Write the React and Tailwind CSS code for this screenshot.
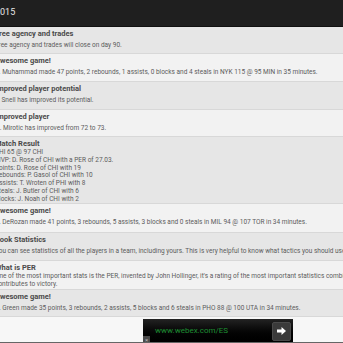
import React from "react";

const rows = [
  { h: "h-[27px]", bg: "bg-[#e6e6e6]", title: "Free agency and trades", lines: ["Free agency and trades will close on day 90."] },
  { h: "h-[28px]", bg: "bg-[#f2f2f2]", title: "Awesome game!", lines: ["S. Muhammad made 47 points, 2 rebounds, 1 assists, 0 blocks and 4 steals in NYK 115 @ 95 MIN in 35 minutes."] },
  { h: "h-[28px]", bg: "bg-[#e6e6e6]", title: "Improved player potential", lines: ["T. Snell has improved its potential."] },
  { h: "h-[27px]", bg: "bg-[#f2f2f2]", title: "Improved player", lines: ["N. Mirotic has improved from 72 to 73."] },
  {
    h: "h-[67px]", bg: "bg-[#e6e6e6]", title: "Match Result", tight: true,
    lines: [
      "PHI 65 @ 97 CHI",
      "MVP: D. Rose of CHI with a PER of 27.03.",
      "Points: D. Rose of CHI with 19",
      "Rebounds: P. Gasol of CHI with 10",
      "Assists: T. Wroten of PHI with 8",
      "Steals: J. Butler of CHI with 6",
      "Blocks: J. Noah of CHI with 2",
    ],
  },
  { h: "h-[29px]", bg: "bg-[#f2f2f2]", title: "Awesome game!", lines: ["D. DeRozan made 41 points, 3 rebounds, 5 assists, 3 blocks and 0 steals in MIL 94 @ 107 TOR in 34 minutes."] },
  { h: "h-[28px]", bg: "bg-[#e6e6e6]", title: "Book Statistics", lines: ["You can see statistics of all the players in a team, including yours. This is very helpful to know what tactics you should use."] },
  {
    h: "h-[29px]", bg: "bg-[#f2f2f2]", title: "What is PER", tight: true,
    lines: [
      "One of the most important stats is the PER, invented by John Hollinger, it's a rating of the most important statistics combined, which shows how much a player",
      "contributes to victory.",
    ],
  },
  { h: "h-[27px]", bg: "bg-[#e6e6e6]", title: "Awesome game!", lines: ["D. Green made 35 points, 3 rebounds, 2 assists, 5 blocks and 6 steals in PHO 88 @ 100 UTA in 34 minutes."] },
];

export default function App() {
  return (
    <div
      className="relative w-[343px] h-[343px] overflow-hidden bg-[#f7f7f7]"
      style={{ fontFamily: "Roboto, 'Noto Sans', sans-serif" }}
    >
      <div className="h-[27px] bg-[#1f1f1f] flex items-center border-b border-[#111]">
        <span className="ml-[-5px] text-[9px] text-[#e8e8e8] whitespace-nowrap">2015</span>
      </div>
      <div className="flex flex-col">
        {rows.map((r, i) => (
          <div
            key={i}
            className={`${r.h} ${r.bg} border-b border-[#d8d8d8] ml-[-5px] w-[700px] pt-[2px] flex flex-col`}
          >
            <div className="text-[7.5px] font-bold leading-[10px] text-[#4a4a4a] whitespace-nowrap">{r.title}</div>
            <div className={r.tight ? "flex flex-col" : "flex flex-col mt-[2px]"}>
              {r.lines.map((l, j) => (
                <div
                  key={j}
                  className={`text-[6.5px] text-[#5c5c5c] whitespace-nowrap ${r.tight ? "leading-[7.8px]" : "leading-[8px]"}`}
                >
                  {l}
                </div>
              ))}
            </div>
          </div>
        ))}
      </div>

      <div className="absolute left-[143px] top-[319px] w-[150px] h-[24px] bg-gradient-to-b from-[#232323] to-[#000] flex items-center">
        <span className="ml-[12px] text-[8px] text-[#1d8f32] whitespace-nowrap">www.webex.com/ES</span>
        <div className="ml-auto mr-[2px] w-[19px] h-[19px] rounded-[2px] bg-[#3a3a3a] border border-[#4a4a4a] flex items-center justify-center">
          <svg width="9" height="8" viewBox="0 0 9 8">
            <path d="M0 2.5h4.5V0L9 4 4.5 8V5.5H0z" fill="#fff" />
          </svg>
        </div>
        <div className="absolute left-0 bottom-0 w-[7px] h-[7px] bg-[#4a4a4a] flex items-center justify-center text-[6px] leading-none text-[#bbb]">
          ×
        </div>
      </div>
      <div className="absolute left-0 bottom-0 w-full h-[1px] bg-[#666]" />
    </div>
  );
}
